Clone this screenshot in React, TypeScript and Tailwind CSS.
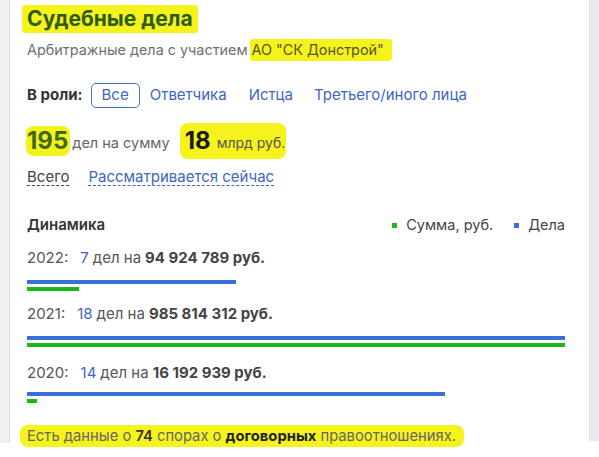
import React from "react";

const years = [
  { y: "2022", n: 7, sum: "94 924 789", v: 94924789, mt: "mt-[12px]", tmt: "mt-[13px]" },
  { y: "2021", n: 18, sum: "985 814 312", v: 985814312, mt: "mt-[12px]", tmt: "mt-[13px]" },
  { y: "2020", n: 14, sum: "16 192 939", v: 16192939, mt: "mt-[9px]", tmt: "mt-[16px]" },
];

export default function App() {
  const maxN = 18;
  const maxV = 985814312;
  return (
    <div
      className="w-[599px] h-[457px] bg-white overflow-hidden flex items-start"
      style={{ fontFamily: "Inter, 'Noto Sans', sans-serif" }}
    >
      <div className="w-[10px] h-[443px] bg-[#eef0f4] border-r border-[#dde0e6] shrink-0" />
      <div className="flex-1 pl-[17px] pr-[24px] pt-[5px] text-[#555]">
        <div className="h-[28px] flex items-center">
          <span className="bg-[#f6f21c] px-[5px] -ml-[5px] rounded-[3px] text-[21px] leading-[28px] font-bold text-[#2d5c16]">
            Судебные дела
          </span>
        </div>
        <div className="mt-[7px] h-[20px] flex items-center text-[14.4px] text-[#707070]">
          Арбитражные дела с участием{" "}
          <span className="ml-[2px] bg-[#f6f21c] rounded-[3px] pl-[2px] pr-[8px] text-[#55561a]">
            АО "СК Донстрой"
          </span>
        </div>
        <div className="mt-[23px] h-[25px] flex items-center text-[15px]">
          <span className="font-bold text-[#333]">В роли:</span>
          <span className="ml-[8px] h-[25px] px-[10px] flex items-center border border-[#4a70c8] rounded-[5px] text-[#3d66c2]">
            Все
          </span>
          <span className="ml-[10px] text-[#3d66c2]">Ответчика</span>
          <span className="ml-[22px] text-[#3d66c2]">Истца</span>
          <span className="ml-[21px] text-[#3d66c2]">Третьего/иного лица</span>
        </div>
        <div className="mt-[19px] h-[28px] flex items-center">
          <span className="bg-[#f6f21c] rounded-[8px] pl-[1px] pr-[2px] -ml-[1px] text-[24px] font-bold text-[#3b6b12] leading-[30px]">
            195
          </span>
          <span className="ml-[2px] text-[14.5px] text-[#666] mt-[4px]">дел на сумму</span>
          <span className="ml-[10px] bg-[#f6f21c] rounded-[8px] pl-[5px] pr-[1px] flex items-center leading-[32px]">
            <span className="text-[24px] font-bold text-[#1a1a1a]">18</span>
            <span className="ml-[6px] text-[14px] text-[#555] mt-[4px]">млрд руб.</span>
          </span>
        </div>
        <div className="mt-[12px] h-[20px] flex items-center text-[15px]">
          <span className="text-[#444] border-b border-dashed border-[#444] leading-[17px]">Всего</span>
          <span className="ml-[19px] text-[#3d66c2] border-b border-dashed border-[#3d66c2] leading-[17px]">
            Рассматривается сейчас
          </span>
        </div>
        <div className="mt-[28px] h-[20px] flex items-center justify-between text-[14.5px]">
          <span className="font-semibold text-[#333] text-[15px]">Динамика</span>
          <div className="flex items-center text-[#444]">
            <span className="w-[5px] h-[5px] bg-[#1fb51f]" />
            <span className="ml-[9px]">Сумма, руб.</span>
            <span className="ml-[21px] w-[5px] h-[5px] bg-[#3a6fd6]" />
            <span className="ml-[9px]">Дела</span>
          </div>
        </div>
        {years.map((r) => (
          <div key={r.y}>
            <div className={`${r.tmt} h-[20px] flex items-center text-[15px] text-[#555]`}>
              <span>{r.y}:</span>
              <span className="ml-[12px] text-[#3d66c2]">{r.n}</span>
              <span className="ml-[4px]">дел на</span>
              <span className="ml-[4px] font-bold text-[#444]">{r.sum} руб.</span>
            </div>
            <div className={`${r.mt} flex flex-col gap-[3px]`}>
              <div className="h-[4px] bg-[#3a6fd6]" style={{ width: `${(r.n / maxN) * 100}%` }} />
              <div className="h-[4px] bg-[#16b916]" style={{ width: `${Math.max((r.v / maxV) * 100, 1.9)}%` }} />
            </div>
          </div>
        ))}
        <div className="mt-[22px] h-[22px] flex items-center">
          <span className="-ml-[7px] bg-[#f6f21c] rounded-[8px] pl-[7px] pr-[8px] text-[14.75px] leading-[22px] text-[#666]">
            Есть данные о <span className="font-semibold text-[#333]">74</span> спорах о{" "}
            <span className="font-bold text-[#222]">договорных</span> правоотношениях.
          </span>
        </div>
      </div>
      <div className="w-[10px] h-[441px] bg-[#e8eaef] border-l border-[#e0e3e8] shrink-0" />
    </div>
  );
}
